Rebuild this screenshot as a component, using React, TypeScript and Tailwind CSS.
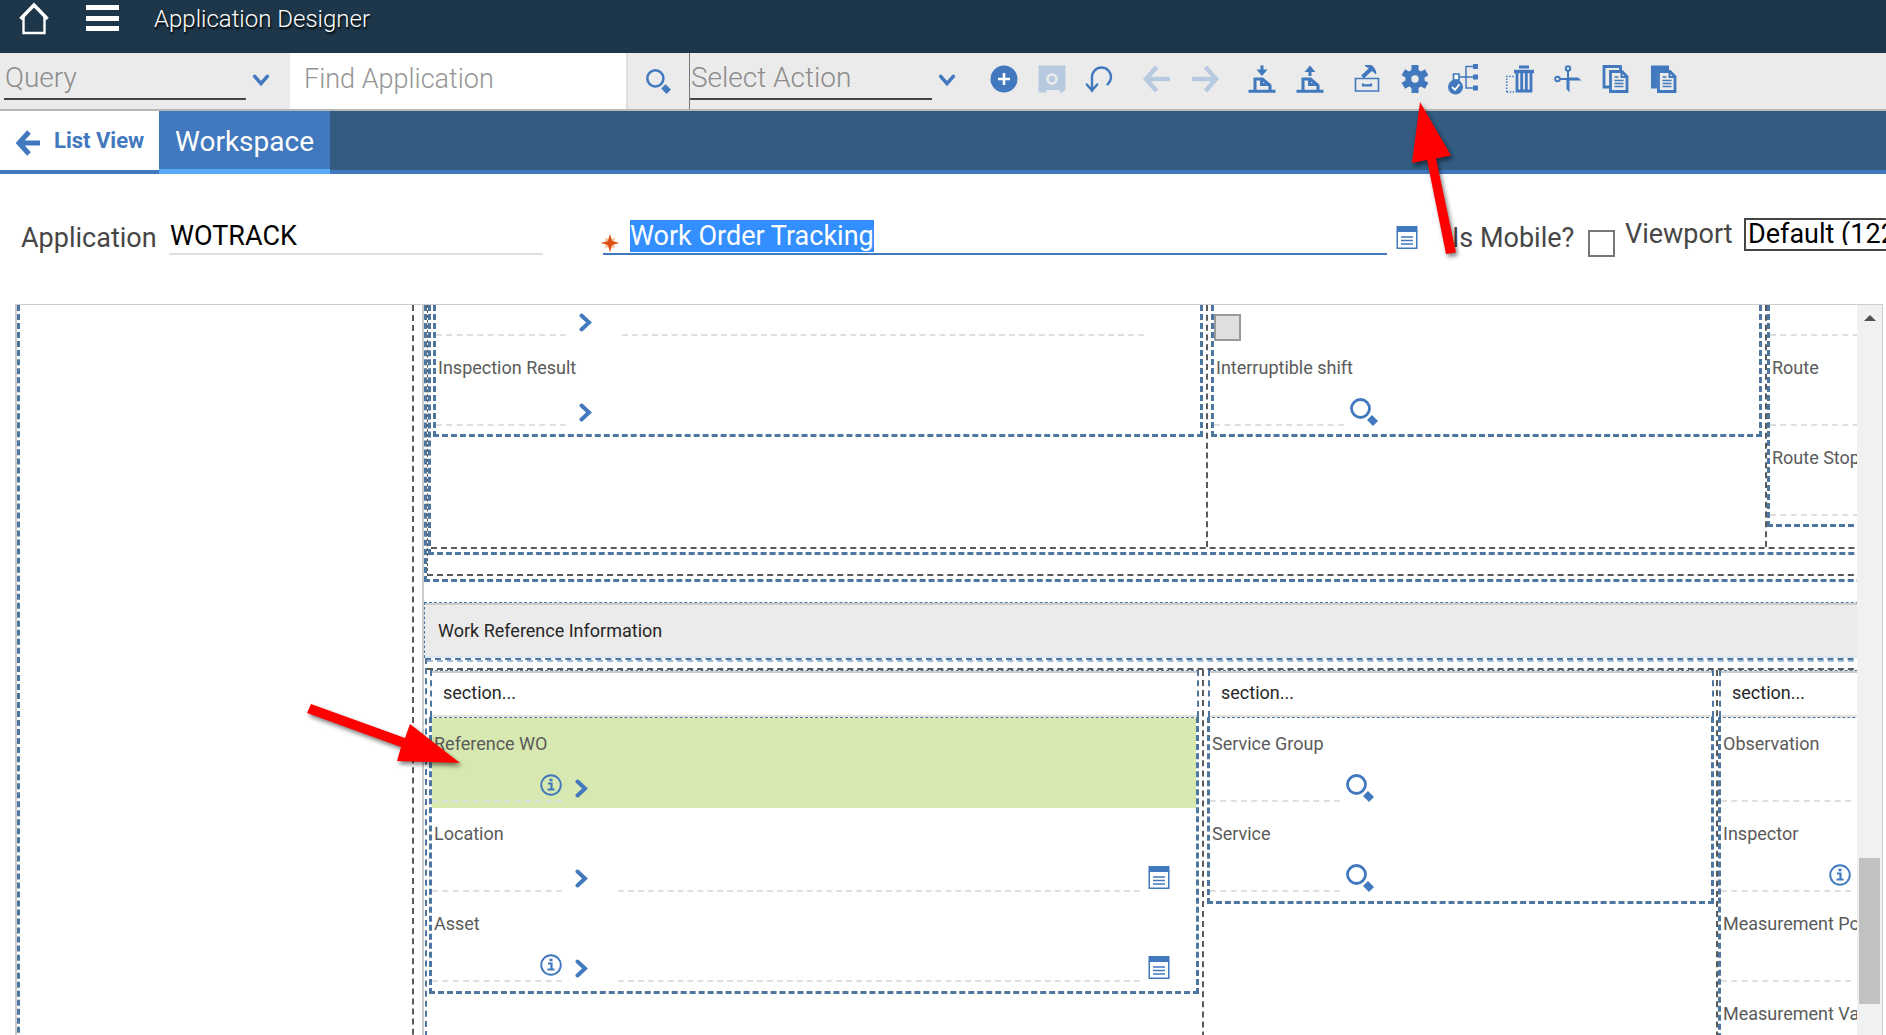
import type { ReactNode } from 'react';
import clsx from 'clsx';

function ChevronDown() {
  return (
    <svg width="18" height="14" viewBox="0 0 20 14" fill="none" stroke="#4178be" strokeWidth="4" strokeLinecap="round">
      <path d="M3 3l7 8 7-8" />
    </svg>
  );
}

function ChevronRight() {
  return (
    <svg width="13" height="19" viewBox="0 0 13 19" fill="none" stroke="#4178be" strokeWidth="4" strokeLinecap="round">
      <path d="M2.5 2.5l7.500 7-7.500 7" />
    </svg>
  );
}

function SearchIcon({ size = 28 }: { size?: number }) {
  return (
    <svg width={size} height={size} viewBox="0 0 28 28" fill="none" stroke="#4178be">
      <circle cx="10.5" cy="10.5" r="9" strokeWidth="2.8" />
      <path d="M19.500 19.500l6 6" strokeWidth="7" />
    </svg>
  );
}

function InfoIcon() {
  return (
    <svg width="22" height="22" viewBox="0 0 22 22" fill="none" stroke="#4178be">
      <circle cx="11" cy="11" r="9.8" strokeWidth="1.900" />
      <path d="M8 9.500h3.500V15M7.500 15.500h7" strokeWidth="2.200" />
      <path d="M9.500 6h3" strokeWidth="2.600" />
    </svg>
  );
}

function DetailIcon() {
  return (
    <svg width="22" height="23" viewBox="0 0 21 23" fill="none" stroke="#4178be">
      <path d="M0 0h21v6H0z" fill="#4178be" stroke="none" />
      <path d="M.75 5v17.250h19.500V5" strokeWidth="1.500" />
      <path d="M4.500 11h12M4.500 14.500h12M4.500 18h12" strokeWidth="1.500" />
    </svg>
  );
}

const toolbarGroups: { name: string; disabled?: boolean; icon: ReactNode }[][] = [
  [
    {
      name: 'New application',
      icon: (
        <>
          <circle cx="16" cy="16" r="13.500" fill="#4178be" />
          <path d="M16 10v12M10 16h12" stroke="#fff" strokeWidth="2.600" />
        </>
      ),
    },
    {
      name: 'Save application',
      disabled: true,
      icon: (
        <>
          <path d="M2.500 2.500h27v24l-3 3h-3v-2.500h-13v2.500h-8z" fill="#b8cae0" />
          <circle cx="16" cy="16" r="4.500" stroke="#ebebeb" strokeWidth="2.600" fill="#b8cae0" />
        </>
      ),
    },
    {
      name: 'Clear changes',
      icon: (
        <path d="M8 28V14a9.500 9.500 0 0 1 19 0c0 3-1.500 5.500-3.500 7.500M2.800 21.500L8 27.500l5.200-6" fill="none" stroke="#4178be" strokeWidth="2.400" strokeLinecap="round" />
      ),
    },
  ],
  [
    {
      name: 'Previous',
      disabled: true,
      icon: <path d="M29 16H5M15.500 4L5 16l10.500 12" fill="none" stroke="#b8cae0" strokeWidth="4.500" />,
    },
    {
      name: 'Next',
      disabled: true,
      icon: <path d="M3 16h24M16.500 4L27 16 16.500 28" fill="none" stroke="#b8cae0" strokeWidth="4.500" />,
    },
  ],
  [
    {
      name: 'Import application definition',
      icon: (
        <g fill="none" stroke="#4178be" strokeWidth="3">
          <path d="M16 2.500v8M2.500 28.300h27" />
          <path d="M10.500 6.500h11L16 13z" fill="#4178be" stroke="none" />
          <path d="M9 28V16h7.500l7.500 6.500V28" />
          <path d="M15.500 15v6.500h8" />
        </g>
      ),
    },
    {
      name: 'Export application definition',
      icon: (
        <g fill="none" stroke="#4178be" strokeWidth="3">
          <path d="M16 13V5M2.500 28.300h27" />
          <path d="M10.500 9h11L16 2.500z" fill="#4178be" stroke="none" />
          <path d="M9 28V16h7.500l7.500 6.500V28" />
          <path d="M15.500 15v6.500h8" />
        </g>
      ),
    },
  ],
  [
    {
      name: 'Control palette',
      icon: (
        <g fill="none" stroke="#4178be">
          <path d="M4.500 15.500h23v12.500h-23z" strokeWidth="1.600" />
          <path d="M12 20.500v1.800h8v-1.800" strokeWidth="2.200" />
          <path d="M11.500 14L20 6" strokeWidth="4" />
          <path d="M14 2.500h6q4 1.500 5 8.500l-7-6z" fill="#4178be" strokeWidth="1" />
        </g>
      ),
    },
    {
      name: 'Control properties',
      icon: (
        <>
          <g stroke="#4178be" strokeWidth="7">
            <path d="M16 2v28M4.300 9.300l23.400 13.400M4.300 22.700L27.700 9.300" />
          </g>
          <circle cx="16" cy="16" r="6.700" fill="#ebebeb" stroke="#4178be" strokeWidth="6" />
        </>
      ),
    },
    {
      name: 'Toggle show hidden',
      icon: (
        <g stroke="#4178be" fill="none">
          <path d="M12 14h15M27 3.500h-8v21.500h8" strokeWidth="1.500" />
          <path d="M6.500 11H12v6H6.500z" fill="#fff" strokeWidth="1.700" />
          <path d="M26 1h5v5h-5zM26 11.500h5v5h-5zM26 22.500h5v5h-5z" fill="#4178be" stroke="none" />
          <circle cx="8.500" cy="24" r="7.500" fill="#4178be" stroke="none" />
          <path d="M5 24l3 2.800 4.500-5.600" stroke="#fff" strokeWidth="1.800" />
        </g>
      ),
    },
  ],
  [
    {
      name: 'Delete control',
      icon: (
        <g fill="none" stroke="#4178be">
          <path d="M2.700 29V13.500H10M2.700 29H10" strokeWidth="1.500" strokeDasharray="1.500 1.500" />
          <path d="M15 4h10" strokeWidth="3" />
          <path d="M10 8.500h20" strokeWidth="3.500" />
          <path d="M13 9v19h14V9M17.700 9v19M22.300 9v19" strokeWidth="2.800" />
        </g>
      ),
    },
    {
      name: 'Cut control',
      icon: (
        <g fill="none" stroke="#4178be">
          <circle cx="5.500" cy="16" r="2.300" strokeWidth="1.900" />
          <circle cx="16" cy="5.500" r="2.300" strokeWidth="1.900" />
          <path d="M8 16h11M16 8v11" strokeWidth="2" />
          <path d="M16 14.500h10l3.500 3H17.500v12l-3-3.500v-9z" fill="#4178be" stroke="none" />
        </g>
      ),
    },
    {
      name: 'Copy control',
      icon: (
        <g fill="none" stroke="#4178be">
          <path d="M10 24H4V3.500h16.500V7" strokeWidth="2.800" />
          <path d="M10.500 8.500H22l5 5v15H10.500z" strokeWidth="2.800" />
          <path d="M21.500 8v6h6" strokeWidth="2" />
          <path d="M14.500 14h4M14.500 17.500h9M14.500 20.500h9M14.500 23.500h9" strokeWidth="1.500" />
        </g>
      ),
    },
    {
      name: 'Paste control',
      icon: (
        <g fill="none" stroke="#4178be">
          <path d="M3 2.500h18V7H9v18.500H3z" fill="#4178be" stroke="none" />
          <path d="M10.500 8.500H22l5 5v15H10.500z" fill="#ebebeb" strokeWidth="2.800" />
          <path d="M21.500 8v6h6" strokeWidth="2" />
          <path d="M14.500 14h4M14.500 17.500h9M14.500 20.500h9M14.500 23.500h9" strokeWidth="1.500" />
        </g>
      ),
    },
  ],
];

type FieldProps = {
  label: string;
  info?: boolean;
  action?: 'chevron' | 'search';
  description?: boolean;
  detail?: boolean;
  selected?: boolean;
};

function FieldControls({ label, info, action, description, detail }: FieldProps) {
  return (
    <div className="flex items-end">
      <div className="flex h-8 w-[130px] shrink-0 items-start border-b-2 border-dashed border-[#dfdfdf]">
        <input aria-label={label} className="h-6 w-0 min-w-0 flex-1 bg-transparent px-1 outline-none" />
        {info && (
          <button type="button" aria-label={`${label} information`} className="mt-1">
            <InfoIcon />
          </button>
        )}
      </div>
      {action === 'chevron' && (
        <button type="button" aria-label={`${label} menu`} className="mb-1 ml-[13px]">
          <ChevronRight />
        </button>
      )}
      {action === 'search' && (
        <button type="button" aria-label={`Search ${label}`} className="ml-1.5">
          <SearchIcon />
        </button>
      )}
      {description && (
        <input
          aria-label={`${label} description`}
          className="ml-[30px] h-8 w-[522px] shrink-0 border-b-2 border-dashed border-[#dfdfdf] outline-none"
        />
      )}
      {detail && (
        <button type="button" aria-label={`${label} long description`} className="mb-[3px] ml-2">
          <DetailIcon />
        </button>
      )}
    </div>
  );
}

function Field(props: FieldProps) {
  return (
    <div className={clsx('flex h-[90px] flex-col justify-between pt-3 pb-1.5', props.selected && 'bg-[#d7e8b0]')}>
      <span className="pl-0.5 text-lg/7 whitespace-nowrap text-[#5a5a5a]">{props.label}</span>
      <FieldControls {...props} />
    </div>
  );
}

function Section({ className, children }: { className?: string; children: ReactNode }) {
  return (
    <div className={className}>
      <div className="ml-px flex h-[47px] flex-col border-x-2 border-t border-dashed border-[#4d77a0]">
        <div className="flex flex-1 items-center border-t-2 border-b-2 border-solid border-t-[#cccccc] border-b-[#e6e1d8] px-[11px] pb-0.5 text-lg text-[#262626]">
          section...
        </div>
      </div>
      <div className="border-[3px] border-t border-dashed border-[#4d77a0] pb-[3px]">{children}</div>
    </div>
  );
}

export default function App() {
  return (
    <div className="relative flex h-screen flex-col overflow-hidden bg-white font-[Roboto,sans-serif] text-[#464646]">
      <header className="flex h-[53px] shrink-0 bg-[#1d3649]">
        <button type="button" aria-label="Home" className="mt-[2px] ml-[18px] h-8 w-8">
          <svg width="32" height="33" viewBox="0 0 32 33" fill="none" stroke="#fff">
            <path d="M2.500 17L16 3l13.500 14" strokeWidth="3.400" />
            <path d="M5.500 15v16h21V15" strokeWidth="2.400" />
          </svg>
        </button>
        <button type="button" aria-label="Menu" className="mt-[5px] ml-9 flex h-[26px] w-[33px] flex-col justify-between">
          <span className="h-[5px] w-full bg-white" />
          <span className="h-[5px] w-full bg-white" />
          <span className="h-[5px] w-full bg-white" />
        </button>
        <h1 className="mt-[3px] ml-[35px] text-2xl/8 font-light text-white [text-shadow:1px_2px_2px_#000]">Application Designer</h1>
      </header>

      <div className="flex h-[58px] shrink-0 border-b-2 border-[#b8b8b8] bg-[#ebebeb]">
        <div className="flex w-[290px] shrink-0 items-start pl-1">
          <input
            aria-label="Query"
            placeholder="Query"
            className="h-[47px] w-[242px] border-b-2 border-[#464646] pt-1 pl-px text-[28px] font-light outline-none placeholder:text-[#8c8c8c]"
          />
          <button type="button" aria-label="Open query list" className="mt-5 ml-1.5">
            <ChevronDown />
          </button>
        </div>
        <input
          aria-label="Find Application"
          placeholder="Find Application"
          className="w-[338px] border-r-2 border-[#e0e0e0] bg-white pb-1 pl-[14px] text-[27px] font-light outline-none placeholder:text-[#959595]"
        />
        <button type="button" aria-label="Find" className="flex w-[61px] items-center justify-center">
          <SearchIcon size={25} />
        </button>
        <div className="flex w-[291px] shrink-0 items-start border-l border-[#777]">
          <input
            aria-label="Select Action"
            placeholder="Select Action"
            className="h-[47px] w-[242px] border-b-2 border-[#464646] pt-1 pl-px text-[28px] font-light outline-none placeholder:text-[#8c8c8c]"
          />
          <button type="button" aria-label="Open action list" className="mt-5 ml-1.5">
            <ChevronDown />
          </button>
        </div>
        <div className="flex items-center gap-[9px]">
          {toolbarGroups.map((group) => (
            <div key={group[0].name} className="flex">
              {group.map(({ name, disabled, icon }) => (
                <button key={name} type="button" aria-label={name} disabled={disabled} className="flex w-12 justify-center pb-1">
                  <svg width="32" height="32" viewBox="0 0 32 32">
                    {icon}
                  </svg>
                </button>
              ))}
            </div>
          ))}
        </div>
      </div>

      <nav className="flex h-[63px] shrink-0 bg-[#325c80]">
        <a href="#list" className="flex w-[159px] items-center border-b-4 border-[#4178be] bg-white pl-[15px] text-[22px] font-bold whitespace-nowrap text-[#4178be]">
          <svg width="25" height="26" viewBox="0 0 25 26" fill="none" stroke="#4178be" strokeWidth="5" className="mt-1 mr-3.5 shrink-0">
            <path d="M25 13H4M14 2L4 13l10 11" />
          </svg>
          List View
        </a>
        <a href="#workspace" className="flex w-[171px] items-center justify-center border-b-[5px] border-[#5aaafa] bg-[#4178be] pt-1 text-[28px] text-white">
          Workspace
        </a>
        <div className="flex-1 border-b-4 border-[#4178be]" />
      </nav>

      <div className="flex h-[130px] shrink-0 items-start overflow-hidden pt-11 pl-[21px] text-[27px]/8 whitespace-nowrap">
        <label htmlFor="application" className="mt-1 w-[148px] shrink-0">
          Application
        </label>
        <input
          id="application"
          defaultValue="WOTRACK"
          className="h-[37px] w-[374px] shrink-0 border-b-2 border-[#dfdfdf] pl-px text-black outline-none"
        />
        <div className="relative ml-[60px] flex h-[37px] w-[784px] shrink-0 border-b-2 border-[#4178be] pl-[27px]">
          <svg width="20" height="20" viewBox="0 0 20 20" className="absolute bottom-0 -left-[3px]">
            <path d="M10 2l1.500 4L15 5l-1 3.500 5 1.500-5 1.500L15 15l-3.500-1-1.500 5-1.500-5L5 15l1-3.500L1 10l5-1.500L5 5l3.500 1z" fill="#f8b98a" />
            <path d="M10 1l2 7 7 2-7 2-2 7-2-7-7-2 7-2z" fill="#dd4f12" />
          </svg>
          <input
            aria-label="Application description"
            defaultValue="Work Order Tracking"
            autoFocus
            onFocus={(e) => e.currentTarget.select()}
            className="h-[35px] flex-1 text-black outline-none selection:bg-[#338fff] selection:text-white"
          />
        </div>
        <button type="button" aria-label="Long description" className="mt-2 ml-[9px]">
          <DetailIcon />
        </button>
        <label htmlFor="mobile" className="mt-1 ml-[34px] w-[136px] shrink-0">
          Is Mobile?
        </label>
        <input id="mobile" type="checkbox" className="mt-3 h-[27px] w-[27px] shrink-0 appearance-none border-2 border-[#777]" />
        <label htmlFor="viewport" className="ml-2.5 w-[119px] shrink-0">
          Viewport
        </label>
        <select id="viewport" className="h-[33px] w-[300px] shrink-0 appearance-none border-2 border-[#464646] pb-1 pl-0.5 leading-7 text-black">
          <option>Default (1220px)</option>
        </select>
      </div>

      <main className="mr-[3px] ml-[15px] flex min-h-0 flex-1 border-t border-r border-l-2 border-[#cccccc]">
        <div className="flex min-w-0 flex-1 items-start overflow-hidden">
          <aside className="h-[800px] w-[397px] shrink-0 border-r-2 border-l-[3px] border-dashed border-r-[#5a5a5a] border-l-[#4d77a0]" />
          <div className="ml-2 h-[800px] shrink-0 border-l-2 border-[#cccccc]">
            <div className="w-[1700px] border-b-[3px] border-l-[3px] border-dashed border-[#4d77a0] pb-[3px]">
              <div className="border-b-2 border-l border-dashed border-[#5a5a5a] pb-[19px]">
                <div className="border-b-[3px] border-l-[3px] border-dashed border-[#4d77a0] pb-[3px]">
                  <div className="flex h-[244px] border-b-2 border-dashed border-[#5a5a5a]">
                    <div className="w-[777px] shrink-0 border-r-2 border-dashed border-[#5a5a5a] pr-[3px] pl-0.5">
                      <div className="border-[3px] border-t-0 border-dashed border-[#4d77a0] pb-0.5">
                        <div className="flex h-[37px] flex-col justify-end pb-1.5">
                          <FieldControls label="Inspection Form" action="chevron" description />
                        </div>
                        <Field label="Inspection Result" action="chevron" />
                      </div>
                    </div>
                    <div className="w-[559px] shrink-0 border-r-2 border-dashed border-[#5a5a5a] px-[3px]">
                      <div className="border-[3px] border-t-0 border-dashed border-[#4d77a0] pb-0.5">
                        <div className="h-[37px] pt-[9px]">
                          <input type="checkbox" disabled aria-label="Interruptible" className="block h-[27px] w-[27px] appearance-none border-2 border-[#999] bg-[#dfdfdf]" />
                        </div>
                        <Field label="Interruptible shift" action="search" />
                      </div>
                    </div>
                    <div className="flex-1">
                      <div className="border-b-[3px] border-l-[3px] border-dashed border-[#4d77a0] pb-0.5">
                        <div className="flex h-[37px] flex-col justify-end pb-1.5">
                          <FieldControls label="Classification" />
                        </div>
                        <Field label="Route" />
                        <Field label="Route Stop" />
                      </div>
                    </div>
                  </div>
                </div>
              </div>
            </div>

            <section className="mt-5 w-[1700px]">
              <div className="border-t border-l border-dashed border-[#4d77a0]">
                <h2 className="flex h-[55px] items-center border-t-2 border-b-2 border-t-[#cccccc] border-b-[#dbe6f1] bg-[#ebebeb] pl-[13px] text-lg text-[#262626]">
                  Work Reference Information
                </h2>
              </div>
              <div className="ml-px border-t-2 border-l-2 border-dashed border-[#4d77a0]">
                <div className="mb-1.5 border-t-2 border-dashed border-[#a5bbd1]" />
                <div className="flex h-[500px] border-t-2 border-dashed border-[#5a5a5a]">
                  <div className="w-[777px] shrink-0 border-r-2 border-dashed border-[#5a5a5a] pr-[3px] pl-0.5">
                    <Section>
                      <Field label="Reference WO" info action="chevron" selected />
                      <Field label="Location" action="chevron" description detail />
                      <Field label="Asset" info action="chevron" description detail />
                    </Section>
                  </div>
                  <div className="w-[514px] shrink-0 border-r-2 border-dashed border-[#5a5a5a] pr-0.5 pl-[3px]">
                    <Section>
                      <Field label="Service Group" action="search" />
                      <Field label="Service" action="search" />
                    </Section>
                  </div>
                  <Section className="flex-1">
                    <Field label="Observation" />
                    <Field label="Inspector" info />
                    <Field label="Measurement Point" />
                    <Field label="Measurement Value" />
                  </Section>
                </div>
              </div>
            </section>
          </div>
        </div>

        <div className="flex w-[25px] shrink-0 flex-col items-center bg-[#f1f1f1]">
          <button type="button" aria-label="Scroll up" className="mt-2.5">
            <svg width="12" height="6" viewBox="0 0 12 6">
              <path d="M0 6l6-6 6 6z" fill="#505050" />
            </svg>
          </button>
          <div className="flex-1" />
          <div className="mb-[31px] h-[146px] w-[21px] bg-[#c1c1c1]" />
        </div>
      </main>

      {/* callout arrows over the properties button and the selected field */}
      <svg className="pointer-events-none absolute top-[102px] left-[1412px] drop-shadow-[2px_3px_2px_rgba(0,0,0,0.5)]" width="46" height="154" viewBox="0 0 46 154">
        <path d="M8 0L0 61l15-3 19 94 10-1.500-20-94 15-3z" fill="#f00" />
      </svg>
      <svg className="pointer-events-none absolute top-[704px] left-[307px] drop-shadow-[2px_3px_2px_rgba(0,0,0,0.5)]" width="154" height="60" viewBox="0 0 154 60">
        <path d="M4 0l94 34 5-14 50 39-63-2 4-14L0 9z" fill="#f00" />
      </svg>
    </div>
  );
}
